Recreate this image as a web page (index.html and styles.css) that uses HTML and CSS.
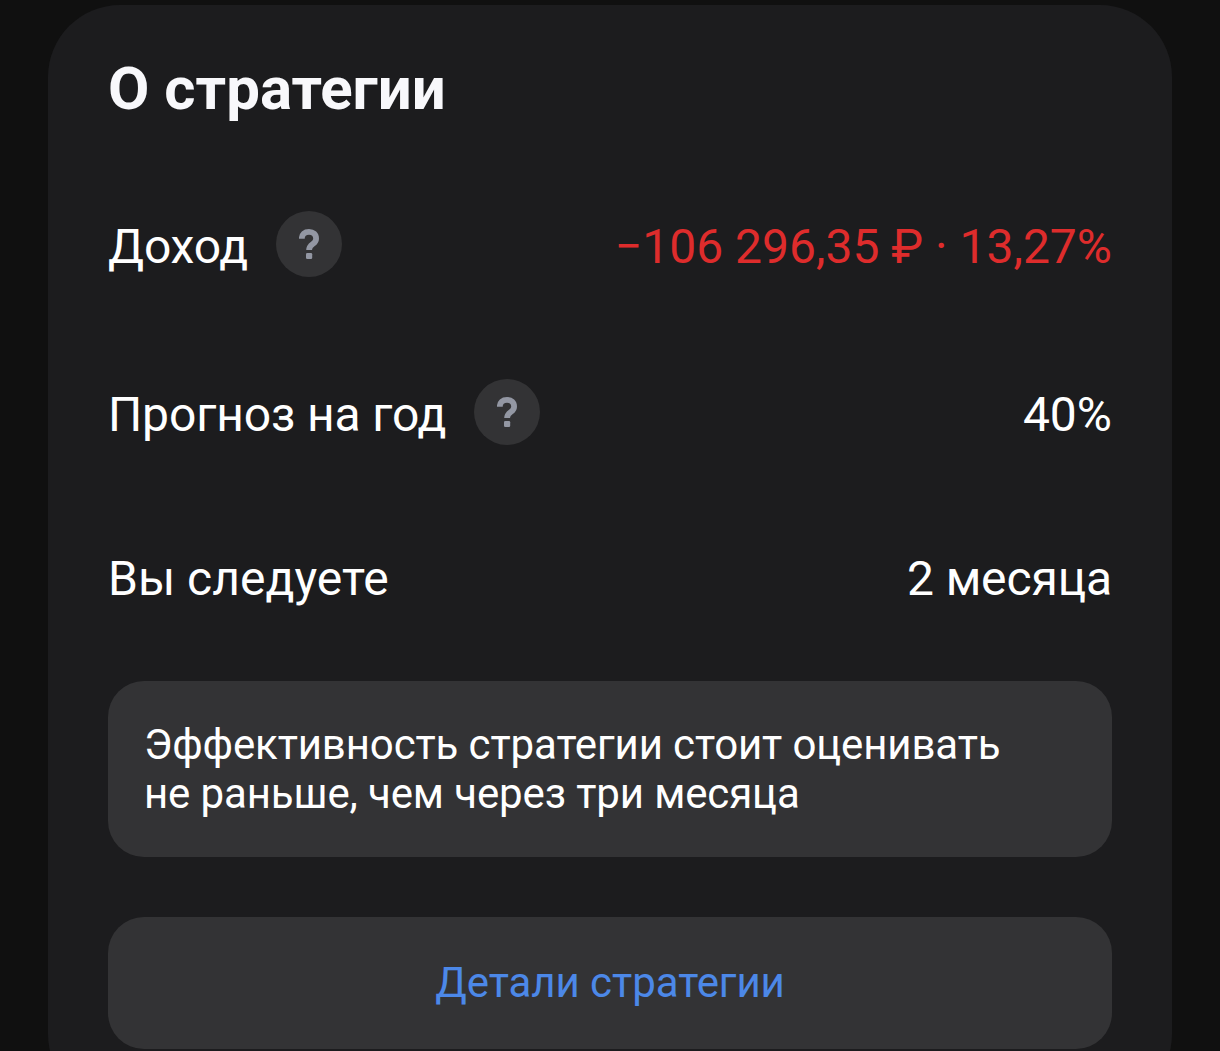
FILE: index.html
```html
<!DOCTYPE html>
<html lang="ru">
<head>
<meta charset="utf-8">
<title>О стратегии</title>
<link rel="stylesheet" href="styles.css">
</head>
<body>
<main class="card">
  <h1 class="title">О стратегии</h1>
  <dl class="stats">
    <div class="row">
      <dt class="label"><span class="name">Доход</span> <span class="help"><svg class="help-icon" viewBox="0 0 20 30"><path d="M2.800 9.800C2.800 5.200 5.700 2.900 10 2.900s7.100 2.400 7.100 6.800c0 5.900-7 4.800-7 11.400" fill="none" stroke="currentColor" stroke-width="5.800"/><rect x="7" y="24" width="6.200" height="6" rx="1.300" fill="currentColor"/></svg></span></dt>
      <dd class="value loss">−106 296,35 ₽ · 13,27%</dd>
    </div>
    <div class="row">
      <dt class="label"><span class="name forecast">Прогноз на год</span> <span class="help"><svg class="help-icon" viewBox="0 0 20 30"><path d="M2.800 9.800C2.800 5.200 5.700 2.900 10 2.900s7.100 2.400 7.100 6.800c0 5.900-7 4.800-7 11.400" fill="none" stroke="currentColor" stroke-width="5.800"/><rect x="7" y="24" width="6.200" height="6" rx="1.300" fill="currentColor"/></svg></span></dt>
      <dd class="value">40%</dd>
    </div>
    <div class="row follow">
      <dt class="label">Вы следуете</dt>
      <dd class="value duration">2 месяца</dd>
    </div>
  </dl>
  <p class="note">Эффективность стратегии стоит оценивать<br>не раньше, чем через три месяца</p>
  <button class="details" type="button">Детали стратегии</button>
</main>
</body>
</html>
```

FILE: styles.css
```css
* { box-sizing: border-box; }
html { background: #101010; }
body {
  height: 1051px;
  margin: 0;
  padding: 5px 48px 0;
  overflow: hidden;
  color: #fff;
  background: #101010;
  font-family: Roboto, sans-serif;
}
.card {
  height: 1101px;
  padding: 48px 60px 0;
  background: #1c1c1e;
  border-radius: 72px;
}
.title {
  height: 72px;
  margin: 0;
  color: #f8f8fb;
  font-size: 60px;
  line-height: 72px;
  font-weight: 700;
}
.stats { margin: 37px 0 0; }
.row {
  display: flex;
  height: 168px;
  align-items: center;
  justify-content: space-between;
  font-size: 48px;
  line-height: 56px;
  white-space: nowrap;
}
.row:not(.follow) .name,
.row:not(.follow) .value { padding-top: 2px; }
.follow { height: 162px; }
.label { display: flex; align-items: center; gap: 28px; }
.name { letter-spacing: -.2px; }
.forecast { letter-spacing: -.13px; }
.value { margin: 0; }
.duration { letter-spacing: -.12px; }
.loss { color: #de2c2c; }
.help {
  display: grid;
  width: 66px;
  height: 66px;
  margin-bottom: 4px;
  place-items: center;
  color: #9397a3;
  background: #333335;
  border-radius: 50%;
}
.help-icon { display: block; width: 20px; height: 30px; }
.note {
  height: 176px;
  margin: 21px 0 0;
  padding: 39px 36px;
  font-size: 42px;
  line-height: 49px;
  letter-spacing: -.12px;
  background: #333335;
  border-radius: 36px;
}
.details {
  display: block;
  width: 100%;
  height: 132px;
  margin-top: 60px;
  padding: 0;
  color: #4c88e8;
  background: #333335;
  border: 0;
  border-radius: 36px;
  font: 42px/50px Roboto, sans-serif;
  letter-spacing: -.06px;
}
```
